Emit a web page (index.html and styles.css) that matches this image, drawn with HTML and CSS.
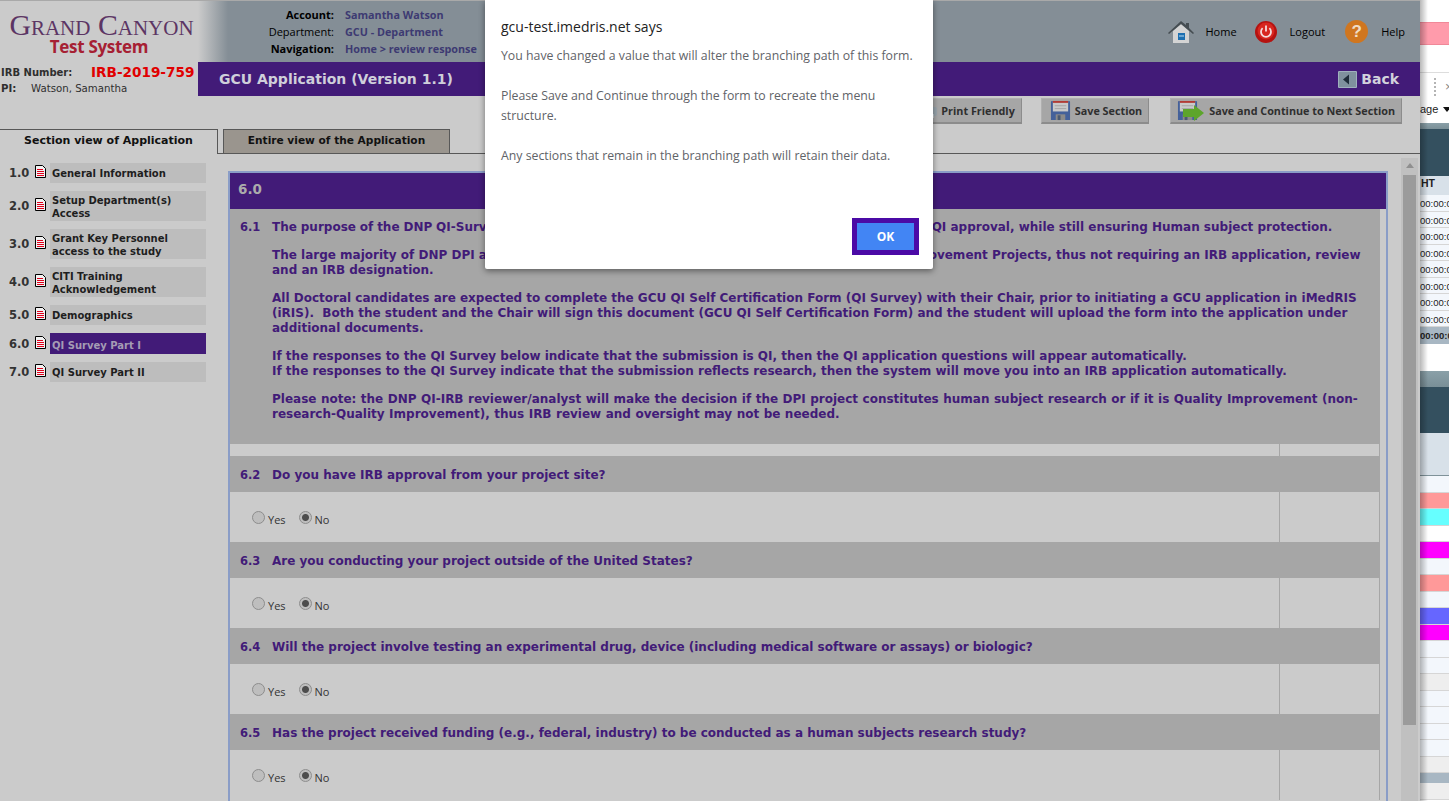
FILE: index.html
```html
<!doctype html>
<html>

	<head>
		<title>GCU Application</title>
		<meta charset="utf-8" />
		<link rel="stylesheet" href="styles.css">
	</head>

	<body>

		<svg class="defs" width="0" height="0">
			<symbol id="doc" viewBox="0 0 11 13">
				<path d="M.5.5h7l3 3v9H.5z" fill="#f2f2f2" stroke="#000" />
				<path d="M2 4.500h6M2 6.500h7M2 8.500h7M2 10.500h7" stroke="#e0001c" />
			</symbol>
			<symbol id="floppy" viewBox="0 0 22 22">
				<path d="M1 2a1 1 0 0 1 1-1h18a1 1 0 0 1 1 1v19H1z" fill="#44619a" />
				<rect x="3" y="1" width="16" height="11" fill="#c9c9c9" />
				<rect x="3" y="1" width="16" height="2" fill="#b23b34" />
				<path d="M5 6h12M5 9h12" stroke="#a5a5a5" />
				<rect x="6" y="15" width="10" height="6" fill="#8a8a8a" />
				<rect x="8" y="16" width="3" height="5" fill="#4a5a72" />
			</symbol>
		</svg>

		<div class="page">
			<div class="app">
				<div class="top">
					<div class="brand">
						<div class="logo">
							<div class="logo-name">Grand Canyon</div>
							<div class="logo-sub">Test System</div>
						</div>
						<div class="irb">
							<span class="irb-label">IRB Number:</span>
							<span class="irb-num">IRB-2019-759</span>
						</div>
						<div class="pi">
							<span class="pi-label">PI:</span>
							<span>Watson, Samantha</span>
						</div>
					</div>
					<div class="head">
						<div class="topbar">
							<div class="account">
								<b>Account:</b><span>Samantha Watson</span>
								<i>Department:</i><span>GCU - Department</span>
								<b>Navigation:</b><span>Home &gt; review response</span>
							</div>
							<div class="links">
								<a class="link-home">
									<svg width="26" height="24" viewBox="0 0 26 24">
										<path d="M5 11v12h16V11L13 4z" fill="#d4d4d4" />
										<path d="M0 13 13 1l5 4V3h3v5l5 5-1 1-12-10L1 14z" fill="#454d52" />
										<rect x="10" y="13" width="7" height="7" fill="#1d6fb0" />
										<path d="M11 16h5" stroke="#bcdcf2" />
									</svg>
									Home
								</a>
								<a class="link-logout">
									<svg width="22" height="22" viewBox="0 0 22 22">
										<circle cx="11" cy="11" r="11" fill="#b51210" />
										<circle cx="11" cy="10" r="8.500" fill="#d8261f" />
										<path d="M7.600 7.200a5 5 0 1 0 6.800 0" fill="none" stroke="#f4dcdc" stroke-width="1.800" />
										<path d="M11 4.500v6" stroke="#f4dcdc" stroke-width="1.800" />
									</svg>
									Logout
								</a>
								<a class="link-help">
									<span class="help-icon">?</span>
									Help
								</a>
							</div>
						</div>
						<div class="titlebar">
							<h1>GCU Application (Version 1.1)</h1>
							<a class="back">
								<svg width="19" height="17" viewBox="0 0 19 17">
									<rect width="19" height="17" rx="1" fill="#9fb0bd" />
									<rect x="1" y="1" width="17" height="15" fill="#7f919e" />
									<path d="M11 3.500v10l-6-5z" fill="#1f2d3a" />
								</svg>
								Back
							</a>
						</div>
						<div class="toolbar">
							<a class="btn btn-print">
								<svg class="print-icon" width="18" height="16" viewBox="0 0 18 16">
									<rect y="4" width="18" height="9" rx="2" fill="#99a5ad" />
									<rect x="3" y="11" width="12" height="4" fill="#c2c9ce" />
								</svg>
								Print Friendly
							</a>
							<a class="btn btn-save">
								<svg width="21" height="21"><use href="#floppy" /></svg>
								Save Section
							</a>
							<a class="btn btn-next">
								<span class="next-icon">
									<svg width="21" height="21"><use href="#floppy" /></svg>
									<svg class="next-arrow" width="21" height="16" viewBox="0 0 21 16">
										<path d="M0 4h11V0l10 8-10 8v-4H0z" fill="#5da52b" />
									</svg>
								</span>
								Save and Continue to Next Section
							</a>
						</div>
					</div>
				</div>

				<div class="tabs">
					<a class="tab tab-on">Section view of Application</a>
					<a class="tab tab-off">Entire view of the Application</a>
				</div>

				<div class="main">
					<ul class="menu">
						<li><span class="num">1.0</span><svg width="11" height="13"><use href="#doc" /></svg><a>General Information</a></li>
						<li class="two"><span class="num">2.0</span><svg width="11" height="13"><use href="#doc" /></svg><a>Setup Department(s) Access</a></li>
						<li class="two"><span class="num">3.0</span><svg width="11" height="13"><use href="#doc" /></svg><a>Grant Key Personnel access to the study</a></li>
						<li class="two"><span class="num">4.0</span><svg width="11" height="13"><use href="#doc" /></svg><a>CITI Training Acknowledgement</a></li>
						<li><span class="num">5.0</span><svg width="11" height="13"><use href="#doc" /></svg><a>Demographics</a></li>
						<li class="active"><span class="num">6.0</span><svg width="11" height="13"><use href="#doc" /></svg><a>QI Survey Part I</a></li>
						<li><span class="num">7.0</span><svg width="11" height="13"><use href="#doc" /></svg><a>QI Survey Part II</a></li>
					</ul>

					<div class="frame">
						<div class="frame-title">6.0</div>
						<div class="frame-body">
							<div class="q-head q-intro">
								<span class="q-num">6.1</span>
								<div class="q-text">
									<p><span class="fit">The purpose of the DNP QI-Survey is to identify those projects which should always be routed for</span> QI approval, while still ensuring Human subject protection.</p>
									<p>The large majority of DNP DPI applications are also expected to meet the criteria of Quality Improvement Projects, thus not requiring an IRB application, review<br>and an IRB designation.</p>
									<p>All Doctoral candidates are expected to complete the GCU QI Self Certification Form (QI Survey) with their Chair, prior to initiating a GCU application in iMedRIS (iRIS).&nbsp; Both the student and the Chair will sign this document (GCU QI Self Certification Form) and the student will upload the form into the application under additional documents.</p>
									<p>If the responses to the QI Survey below indicate that the submission is QI, then the QI application questions will appear automatically.<br>If the responses to the QI Survey indicate that the submission reflects research, then the system will move you into an IRB application automatically.</p>
									<p class="fit-wide">Please note: the DNP QI-IRB reviewer/analyst will make the decision if the DPI project constitutes human subject research or if it is Quality Improvement (non-research-Quality Improvement), thus IRB review and oversight may not be needed.</p>
								</div>
							</div>
							<div class="answer answer-empty"><div></div><div></div></div>

							<div class="q-head"><span class="q-num">6.2</span><div class="q-text">Do you have IRB approval from your project site?</div></div>
							<div class="answer">
								<div class="radios">
									<label><input type="radio" name="q2">Yes</label>
									<label><input type="radio" name="q2" checked>No</label>
								</div>
								<div></div>
							</div>

							<div class="q-head"><span class="q-num">6.3</span><div class="q-text">Are you conducting your project outside of the United States?</div></div>
							<div class="answer">
								<div class="radios">
									<label><input type="radio" name="q3">Yes</label>
									<label><input type="radio" name="q3" checked>No</label>
								</div>
								<div></div>
							</div>

							<div class="q-head"><span class="q-num">6.4</span><div class="q-text">Will the project involve testing an experimental drug, device (including medical software or assays) or biologic?</div></div>
							<div class="answer">
								<div class="radios">
									<label><input type="radio" name="q4">Yes</label>
									<label><input type="radio" name="q4" checked>No</label>
								</div>
								<div></div>
							</div>

							<div class="q-head"><span class="q-num">6.5</span><div class="q-text">Has the project received funding (e.g., federal, industry) to be conducted as a human subjects research study?</div></div>
							<div class="answer">
								<div class="radios">
									<label><input type="radio" name="q5">Yes</label>
									<label><input type="radio" name="q5" checked>No</label>
								</div>
								<div></div>
							</div>
						</div>
					</div>

					<div class="scroll">
						<div class="scroll-up"></div>
						<div class="scroll-thumb"></div>
					</div>
				</div>
			</div>

			<div class="behind">
				<div class="b-blank b-h22"></div>
				<div class="b-pink"></div>
				<div class="b-blank b-h27"></div>
				<div class="b-tools">
					<div class="b-tools-top"><span class="b-dots"></span><span class="b-x">×</span></div>
					<div class="b-tools-bottom">age<span class="b-caret"></span></div>
				</div>
				<div class="b-band b-band-top"></div>
				<div class="b-dark b-h47"></div>
				<div class="b-headcell">HT</div>
				<div class="b-row">00:00:00</div>
				<div class="b-row">00:00:00</div>
				<div class="b-row">00:00:00</div>
				<div class="b-row">00:00:00</div>
				<div class="b-row">00:00:00</div>
				<div class="b-row">00:00:00</div>
				<div class="b-row">00:00:00</div>
				<div class="b-row">00:00:00</div>
				<div class="b-row b-total">00:00:00</div>
				<div class="b-blank b-h27"></div>
				<div class="b-band"></div>
				<div class="b-dark b-h46"></div>
				<div class="b-headcell b-h43"></div>
				<div class="b-row"></div>
				<div class="b-row b-salmon"></div>
				<div class="b-row b-cyan"></div>
				<div class="b-row b-white"></div>
				<div class="b-row b-magenta"></div>
				<div class="b-row"></div>
				<div class="b-row b-salmon"></div>
				<div class="b-row"></div>
				<div class="b-row b-blue"></div>
				<div class="b-row b-magenta"></div>
				<div class="b-row"></div>
				<div class="b-row"></div>
				<div class="b-row b-grey"></div>
				<div class="b-row"></div>
				<div class="b-row"></div>
				<div class="b-row"></div>
				<div class="b-row"></div>
				<div class="b-row b-grey"></div>
				<div class="b-foot"></div>
				<div class="b-row b-grey"></div>
			</div>

			<div class="dialog">
				<div class="dialog-title">gcu-test.imedris.net says</div>
				<div class="dialog-msg">
					You have changed a value that will alter the branching path of this form.<br><br>
					Please Save and Continue through the form to recreate the menu structure.<br><br>
					Any sections that remain in the branching path will retain their data.
				</div>
				<div class="dialog-foot">
					<button class="ok" type="button">OK</button>
				</div>
			</div>
		</div>

	</body>

</html>
```

FILE: styles.css
```css
* {
	box-sizing: border-box;
}

body {
	margin: 0;
	overflow: hidden;
	font-family: "DejaVu Sans", sans-serif;
	background: #fff;
}

p,
h1,
ul {
	margin: 0;
	padding: 0;
}

.defs {
	display: block;
	height: 0;
}

.page {
	position: relative;
	display: flex;
	width: 1449px;
	height: 801px;
	overflow: hidden;
}

.app {
	display: flex;
	flex-direction: column;
	width: 1420px;
	height: 801px;
	background: #cbcbcb;
	border-top: 1px solid #a9a9a9;
}

/* header */
.top {
	display: flex;
	height: 128px;
}

.brand {
	width: 198px;
	flex: none;
	color: #2f2f2f;
	font-size: 11px;
}

.logo {
	width: 198px;
	height: 60px;
	padding: 12px 0 0 5px;
	text-align: center;
}

.logo-name {
	font: 29.800px/24px "Liberation Serif", serif;
	font-variant: small-caps;
	color: #5c3564;
	white-space: nowrap;
}

.logo-sub {
	margin-left: -5px;
	font: bold 17px/19px "Open Sans", sans-serif;
	color: #a62033;
	letter-spacing: -0.3px;
}

.irb {
	display: flex;
	align-items: center;
	height: 21px;
	padding-left: 1px;
}

.irb-label {
	width: 90px;
	margin-top: 2px;
	font-weight: bold;
	font-size: 10px;
}

.irb-num {
	color: #e00000;
	font-weight: bold;
	font-size: 13.600px;
	white-space: nowrap;
}

.pi {
	display: flex;
	align-items: center;
	height: 13px;
	padding-left: 1px;
	font-size: 10.200px;
}

.pi-label {
	width: 30px;
	font-weight: bold;
}

.head {
	flex: 1;
	min-width: 0;
}

.topbar {
	display: flex;
	justify-content: space-between;
	height: 61px;
	padding-left: 65px;
	background: linear-gradient(90deg, #cbcbcb, #848e96 30px);
}

.account {
	display: grid;
	grid-template-columns: 71px auto;
	grid-auto-rows: 17px;
	column-gap: 11px;
	align-items: center;
	align-content: start;
	padding-top: 5px;
	font: 11px "Open Sans", sans-serif;
	white-space: nowrap;
}

.account b,
.account i {
	text-align: right;
	color: #000;
	font-style: normal;
}

.account span {
	color: #3d3a72;
	font-weight: bold;
	font-size: 10.800px;
}

.links {
	display: flex;
	align-items: center;
	height: 61px;
	padding-right: 15px;
	font: 11px "Open Sans", sans-serif;
	color: #000;
}

.links a {
	display: flex;
	align-items: center;
}

.link-home svg {
	margin-right: 11px;
}

.link-logout {
	margin-left: 18px;
}

.link-logout svg {
	margin-right: 13px;
}

.link-help {
	margin-left: 20px;
}

.help-icon {
	display: flex;
	align-items: center;
	justify-content: center;
	width: 23px;
	height: 23px;
	margin-right: 13px;
	border-radius: 50%;
	background: #d0761f;
	color: #f0ddc6;
	font: bold 17px "Liberation Sans", sans-serif;
}

.titlebar {
	display: flex;
	justify-content: space-between;
	align-items: center;
	height: 34px;
	padding: 0 21px;
	background: #421b78;
	color: #d2d2dc;
}

.titlebar h1 {
	font-size: 14px;
	font-weight: bold;
	color: #cfcfda;
}

.back {
	display: flex;
	align-items: center;
	gap: 4px;
	font-size: 14px;
	font-weight: bold;
}

.toolbar {
	display: flex;
	justify-content: flex-end;
	padding: 2px 18px 0 0;
}

.btn {
	display: flex;
	align-items: center;
	height: 26px;
	padding: 0 6px;
	font: bold 10.800px "Open Sans", sans-serif;
	color: #2f2f2f;
	background: #a6a6a6;
	border-top: 1px solid #b0b0b0;
	border-left: 1px solid #b0b0b0;
	border-right: 1px solid #8c8c8c;
	border-bottom: 2px solid #8c8c8c;
	white-space: nowrap;
}

.btn-save {
	margin-left: 19px;
}

.btn-next {
	margin-left: 21px;
}

.btn-save svg {
	margin: 0 4px 0 2px;
}

.print-icon {
	margin-right: 4px;
}

.next-icon {
	position: relative;
	display: block;
	width: 26px;
	height: 21px;
	margin-right: 6px;
}

.next-arrow {
	position: absolute;
	left: 6px;
	top: 5px;
}

/* tabs */
.tabs {
	display: flex;
	gap: 5px;
	height: 25px;
	border-bottom: 1px solid #585858;
}

.tab {
	height: 24px;
	border: 1px solid #585858;
	border-bottom: none;
	background: #9a958e;
	font-size: 11px;
	font-weight: bold;
	line-height: 21px;
	color: #111;
	white-space: nowrap;
	text-align: center;
}

.tab-on {
	width: 218px;
	height: 25px;
	border-left: none;
	background: #cbcbcb;
}

.tab-off {
	width: 227px;
	font-size: 10.600px;
}

/* main */
.main {
	display: flex;
	flex: 1;
	min-height: 0;
}

.menu {
	width: 228px;
	flex: none;
	padding-top: 9px;
	list-style: none;
}

.menu li {
	display: flex;
	align-items: center;
	margin-bottom: 8px;
	padding-left: 9px;
	font-weight: bold;
}

.menu li svg {
	margin-bottom: 3px;
}

.menu .num {
	width: 26px;
	font-size: 11.500px;
	color: #333;
}

.menu a {
	display: flex;
	align-items: center;
	width: 156px;
	min-height: 20px;
	margin-left: 4px;
	padding: 2px;
	background: #bdbdbd;
	color: #1e1e1e;
	font-size: 10px;
	line-height: 13px;
}

.menu .two a {
	padding-top: 3px;
	padding-bottom: 1px;
}

.menu .active a {
	min-height: 21px;
	background: #421b78;
	color: #a59cb4;
	padding-top: 4px;
	padding-bottom: 0;
}

.frame {
	width: 1160px;
	flex: none;
	margin-top: 17px;
	border: 2px solid #8a9dc7;
	border-bottom: none;
	overflow: hidden;
}

.frame-title {
	height: 36px;
	padding-left: 8px;
	background: #421b78;
	color: #ababab;
	font-size: 13.500px;
	font-weight: bold;
	line-height: 33px;
}

.frame-body {
	width: 1150px;
	color: #421b78;
	font-weight: bold;
	font-size: 12px;
}

.q-head {
	display: flex;
	height: 36px;
	padding-top: 1px;
	align-items: center;
	background: #a6a6a6;
}

.q-num {
	width: 42px;
	flex: none;
	padding-left: 10px;
	font-size: 11.500px;
}

.q-intro {
	display: flex;
	align-items: flex-start;
	height: 235px;
	padding-top: 11px;
	line-height: 15px;
}

.q-intro .q-num {
	line-height: 15px;
}

.q-intro .q-text {
	padding-right: 18px;
}

.q-intro p {
	margin-bottom: 13px;
}

.fit {
	word-spacing: -0.300px;
}

.fit-wide {
	word-spacing: 0.300px;
}

.answer {
	display: flex;
	height: 50px;
	background: #cbcbcb;
	border-right: 1px solid #a6a6a6;
}

.answer > div:first-child {
	width: 1050px;
	border-right: 1px solid #a6a6a6;
}

.answer-empty {
	height: 12px;
}

.radios {
	display: flex;
	gap: 13px;
	padding: 19px 0 0 22px;
	font: 11px "Open Sans", sans-serif;
	color: #333;
}

.radios label {
	display: flex;
	align-items: flex-start;
	line-height: 18px;
}

.radios input {
	appearance: none;
	width: 13px;
	height: 13px;
	margin: 0 3px 0 0;
	border: 1px solid #8d8d8d;
	border-radius: 50%;
	background: #bebebe;
}

.radios input:checked {
	background: radial-gradient(circle, #4d4d4d 3px, #bebebe 4px);
}

.scroll {
	width: 17px;
	margin: 4px 0 0 13px;
	background: #c0c0c0;
}

.scroll-up {
	position: relative;
	height: 17px;
}

.scroll-up::after {
	content: "";
	position: absolute;
	left: 5px;
	top: 5px;
	border: 4px solid transparent;
	border-top: none;
	border-bottom: 5px solid #8f8f8f;
}

.scroll-thumb {
	width: 13px;
	height: 550px;
	margin-left: 2px;
	background: #9b9b9b;
}

/* window behind */
.behind {
	position: relative;
	flex: 1;
	display: flex;
	flex-direction: column;
	overflow: hidden;
	font: 9.500px "Liberation Sans", sans-serif;
	color: #222;
	background: #fff;
}

.behind::before {
	content: "";
	position: absolute;
	left: 0;
	top: 0;
	bottom: 0;
	width: 8px;
	background: linear-gradient(90deg, rgba(0, 0, 0, 0.28), rgba(0, 0, 0, 0));
}

.b-blank {
	background: #fff;
}

.b-h22 {
	height: 22px;
}

.b-h27 {
	height: 27px;
	flex: none;
}

.b-pink {
	height: 23px;
	background: #ff9bab;
	border-top: 1px solid #f08898;
	border-bottom: 1px solid #f08898;
}

.b-tools {
	height: 51px;
	border-top: 1px solid #ddd;
	font: 11px "Liberation Sans", sans-serif;
}

.b-tools-top {
	display: flex;
	align-items: center;
	height: 27px;
	padding-left: 14px;
}

.b-dots {
	height: 18px;
	border-left: 2px dotted #b4b4b4;
}

.b-x {
	margin-left: 9px;
	color: #888;
	font-size: 13px;
}

.b-tools-bottom {
	display: flex;
	align-items: center;
	margin-top: 3px;
}

.b-caret {
	margin-left: 5px;
	border: 4px solid transparent;
	border-bottom: none;
	border-top: 5px solid #111;
}

.b-band {
	height: 16px;
	flex: none;
	background: linear-gradient(#8aa0a8, #7a8f97);
}

.b-band-top {
	height: 6px;
}

.b-dark {
	flex: none;
	background: #34505f;
}

.b-h47 {
	height: 47px;
}

.b-h46 {
	height: 46px;
}

.b-headcell {
	height: 19px;
	flex: none;
	background: #d8e1e9;
	font-size: 10.500px;
	font-weight: bold;
	line-height: 14px;
	padding-left: 1px;
}

.b-h43 {
	height: 43.500px;
	border-bottom: 1px solid #7f9299;
}

.b-row {
	flex: none;
	height: 16.500px;
	background: #f3f7fc;
	border-bottom: 1px solid #d6d6d6;
	line-height: 17px;
	white-space: nowrap;
}

.b-total {
	background: #a8b7c3;
	font-weight: bold;
	border-bottom: none;
}

.b-salmon {
	background: #ff9999;
}

.b-cyan {
	background: #66ffff;
}

.b-white {
	background: #fff;
}

.b-magenta {
	background: #ff00ff;
}

.b-blue {
	background: #6666ff;
}

.b-grey {
	background: #eee;
}

.b-foot {
	height: 10px;
	flex: none;
	background: #a8b7c3;
}

/* alert box */
.dialog {
	position: absolute;
	left: 485px;
	top: 0;
	display: flex;
	flex-direction: column;
	width: 448px;
	height: 269px;
	padding: 17px 14px 14px 16px;
	background: #fff;
	border-radius: 0 0 2px 2px;
	box-shadow: 0 2px 6px rgba(0, 0, 0, 0.45);
	font-family: "Open Sans", sans-serif;
}

.dialog-title {
	font-size: 14px;
	line-height: 20px;
	color: #222;
}

.dialog-msg {
	margin-top: 9px;
	font-size: 12.300px;
	line-height: 20px;
	color: #5f6368;
}

.dialog-foot {
	display: flex;
	justify-content: flex-end;
	margin-top: auto;
}

.ok {
	width: 67px;
	height: 37px;
	border: 5px solid #4b0aa6;
	background: #4285f4;
	color: #fff;
	font: bold 12px "Open Sans", sans-serif;
}
```
